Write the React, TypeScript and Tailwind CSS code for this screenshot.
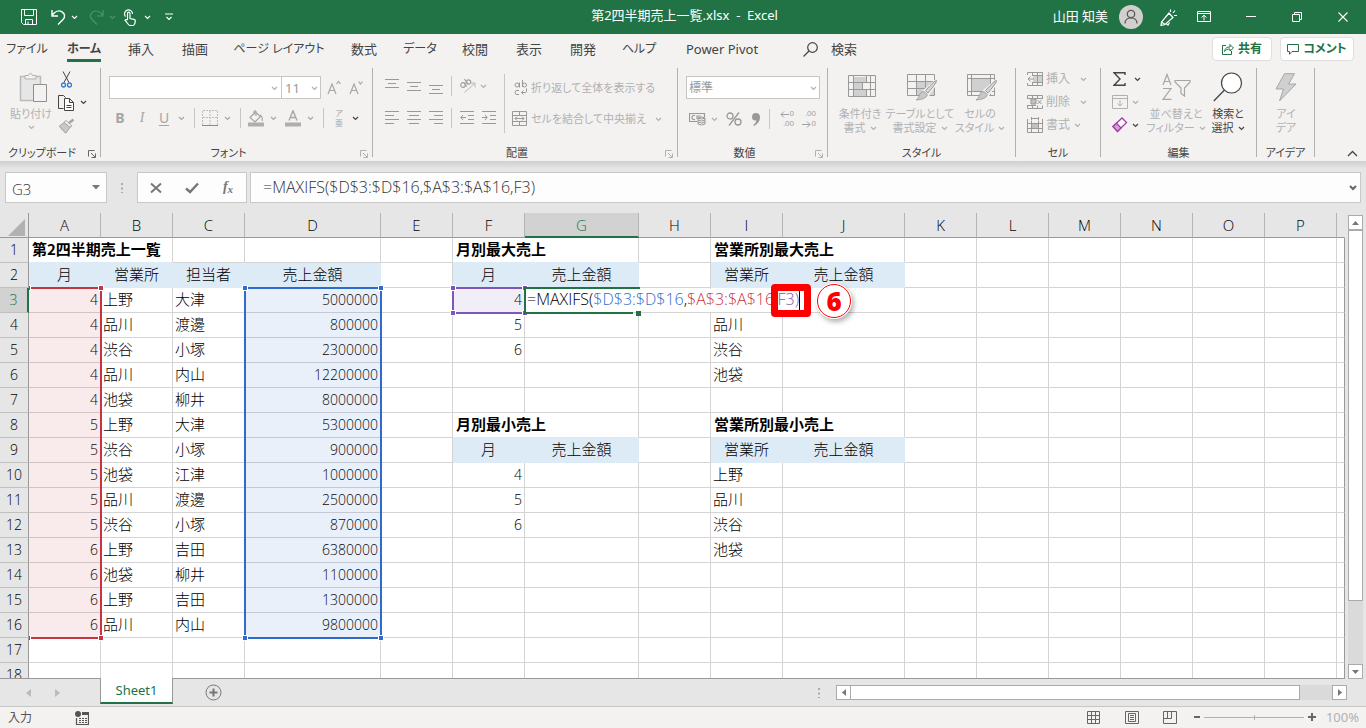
import React from 'react';
import { clsx } from 'clsx';

type IconProps = { w: number; h: number; className?: string; children: React.ReactNode };

function Icon({ w, h, className, children }: IconProps) {
  return (
    <svg
      width={w}
      height={h}
      viewBox={`0 0 ${w} ${h}`}
      fill="none"
      stroke="currentColor"
      className={clsx('shrink-0', className)}
      aria-hidden="true"
    >
      {children}
    </svg>
  );
}

function Chevron({ className }: { className?: string }) {
  return (
    <Icon w={7} h={5} className={clsx('inline-block', className)}>
      <path d="M1 1l2.5 2.5L6 1" strokeWidth="1.2" />
    </Icon>
  );
}

function Lines({ rows }: { rows: [number, number, number][] }) {
  return (
    <Icon w={14} h={16}>
      {rows.map(([x, y, len]) => (
        <path key={y} d={`M${x} ${y + 0.5}h${len}`} />
      ))}
    </Icon>
  );
}

function Separator({ className }: { className?: string }) {
  return <div className={clsx('w-px shrink-0 bg-[#c8c6c4]', className)} />;
}

const TOOL = 'flex h-5 shrink-0 items-center justify-center';

interface GroupProps {
  label: string;
  className: string;
  launcher?: 'dark' | 'light';
  children: React.ReactNode;
}

function Group({ label, className, launcher, children }: GroupProps) {
  return (
    <section className={clsx('flex shrink-0 flex-col border-r border-[#b3b0ad]', className)}>
      <div className="flex h-[78px] text-[#b1b1b1]">{children}</div>
      <div className="relative h-[11px] text-center text-[11px] leading-[13px] whitespace-nowrap text-[#444]">
        {label}
        {launcher && (
          <button
            aria-label={`${label}の設定`}
            className={clsx('absolute right-1 top-1', launcher === 'dark' ? 'text-[#666]' : 'text-[#b1b1b1]')}
          >
            <Icon w={8} h={8}>
              <path d="M.5 6.5v-6h6M3 3l4 4M7.5 3.5v4h-4" />
            </Icon>
          </button>
        )}
      </div>
    </section>
  );
}

interface BigButtonProps {
  icon: React.ReactNode;
  lines: [string, string];
  chevron?: boolean;
  className?: string;
}

function BigButton({ icon, lines, chevron = true, className }: BigButtonProps) {
  return (
    <button className={clsx('flex shrink-0 flex-col items-center pt-1 whitespace-nowrap', className)}>
      <span className="flex h-[30px] items-center">{icon}</span>
      <span className="mt-1 text-[11px] leading-[15px]">{lines[0]}</span>
      <span className="flex items-center text-[11px] leading-[14px]">
        {lines[1]}
        {chevron && <Chevron className={lines[1] ? 'ml-1' : 'mt-1'} />}
      </span>
    </button>
  );
}

function TitleBar() {
  return (
    <header className="flex h-[34px] shrink-0 items-center bg-[#217346] text-white">
      <div className="flex flex-1 items-center pl-[21px]">
        <button aria-label="上書き保存">
          <Icon w={16} h={16}>
            <path d="M.5 .5h15v15H2.5l-2-2zM3.5 .5v6h9v-6M4.5 15.5v-5h7v5M7 12.5v3" />
          </Icon>
        </button>
        <button aria-label="元に戻す" className="ml-[14px] flex items-center gap-[5px]">
          <Icon w={15} h={16}>
            <path d="M1 1v6h6M1 6.5C4 2.5 8 1 11 2.8c3 2 3.500 5 1 7.700L7 15.500" strokeWidth="1.4" />
          </Icon>
          <Chevron />
        </button>
        <button aria-label="やり直し" className="ml-[11px] flex items-center gap-[5px] text-[#4f9070]">
          <Icon w={15} h={16}>
            <path d="M14 1v6H8M14 6.500C11 2.500 7 1 4 2.800c-3 2-3.500 5-1 7.700l5 5" strokeWidth="1.2" />
          </Icon>
          <Chevron />
        </button>
        <button aria-label="タッチ/マウス モードの切り替え" className="ml-[7px] flex items-center gap-2">
          <Icon w={13} h={17}>
            <path d="M2.500 7.500A4 4 0 1 1 9.500 5M4.500 11V4.500q0-1.300 1.200-1.300T7 4.500v5l4 .8q1.500.4 1.300 2l-.5 2.200q-.4 2-2.300 2H7.500Q6 16.500 5 15l-3-3.800q1-1.200 2.500-.2" strokeWidth="1.2" />
          </Icon>
          <Chevron />
        </button>
        <button aria-label="クイック アクセス ツール バーのカスタマイズ" className="ml-[14px]">
          <Icon w={8} h={8}>
            <path d="M0 1h8M1.500 4L4 6.500 6.500 4" strokeWidth="1.200" />
          </Icon>
        </button>
      </div>
      <h1 className="pb-1 text-[13px] leading-5 whitespace-pre">第2四半期売上一覧.xlsx  -  Excel</h1>
      <div className="flex flex-1 items-center justify-end pr-[18px]">
        <span className="text-[13px]">山田 知美</span>
        <span className="ml-[11px] flex h-6 w-6 items-center justify-center rounded-full bg-[#d2d0ce] text-[#5b5957]">
          <Icon w={14} h={16}>
            <circle cx="7" cy="5" r="3.700" strokeWidth="1.300" />
            <path d="M1 14.500C1 7 13 7 13 14.500" strokeWidth="1.300" />
          </Icon>
        </span>
        <button aria-label="近日公開の機能" className="ml-[17px]">
          <Icon w={17} h={17}>
            <path d="M9 4L1.500 13l-.5 3.500 4-1L13 8.500zM1.500 13L5 15.500M6 14.500l2 1.500 1.500-2.500M10.500 3V.5M13 4l2-2.500M14 6.500h3" strokeWidth="1.200" />
          </Icon>
        </button>
        <button aria-label="リボンの表示オプション" className="ml-5">
          <Icon w={14} h={12}>
            <path d="M.5.5h13v10H.5zM.5 2.500h13M7 9.500v-5M4.500 6.500L7 4.200l2.500 2.300" />
          </Icon>
        </button>
        <button aria-label="最小化" className="ml-[35px]">
          <Icon w={10} h={10}><path d="M0 4.500h10" /></Icon>
        </button>
        <button aria-label="元のサイズに戻す" className="ml-9">
          <Icon w={10} h={10}>
            <path d="M.5 2.500h7v7h-7zM2.500 2.500v-2h7v7h-2" />
          </Icon>
        </button>
        <button aria-label="閉じる" className="ml-9">
          <Icon w={10} h={10}><path d="M.5.5l9 9M9.500.5l-9 9" strokeWidth="1.100" /></Icon>
        </button>
      </div>
    </header>
  );
}

const TABS = [
  { name: 'ファイル', width: 'w-[54px]', kana: true },
  { name: 'ホーム', width: 'w-[60px]', active: true, kana: true },
  { name: '挿入', width: 'w-[54px]' },
  { name: '描画', width: 'w-[54px]' },
  { name: 'ページ レイアウト', width: 'w-[114px]', kana: true },
  { name: '数式', width: 'w-[56px]' },
  { name: 'データ', width: 'w-[56px]', kana: true },
  { name: '校閲', width: 'w-[54px]' },
  { name: '表示', width: 'w-[54px]' },
  { name: '開発', width: 'w-[54px]' },
  { name: 'ヘルプ', width: 'w-[58px]', kana: true },
  { name: 'Power Pivot', width: 'w-[108px]' },
];

function RibbonTabs() {
  return (
    <nav className="flex h-8 shrink-0 text-[13px] text-[#444]">
      {TABS.map((tab) => (
        <button
          key={tab.name}
          className={clsx(
            'flex shrink-0 flex-col items-center pt-[5px] whitespace-nowrap',
            tab.width,
            tab.kana ? 'text-xs leading-5' : 'leading-5',
            tab.active && 'font-bold'
          )}
        >
          {tab.name}
          {tab.active && <span className="h-[3px] w-[34px] bg-[#217346]" />}
        </button>
      ))}
      <button className="ml-[27px] flex items-start gap-[13px] pt-[5px] leading-5">
        <Icon w={15} h={15} className="mt-[3px]">
          <circle cx="9.500" cy="5.500" r="4.800" strokeWidth="1.200" />
          <path d="M6 9L.5 14.500" strokeWidth="1.200" />
        </Icon>
        検索
      </button>
      <div className="flex flex-1 items-start justify-end gap-2 pt-[3px] pr-3 text-xs font-bold text-[#217346]">
        <button className="flex h-6 w-[60px] items-center justify-center gap-1 rounded-sm border border-[#e1dfdd] bg-white">
          <Icon w={12} h={12}>
            <path d="M4 2.500H.5v9h9V8M2.500 8.500C3 5 5 4 8 4V1.500L11.500 5 8 8V6C5.500 6 4 6.500 2.500 8.500z" />
          </Icon>
          共有
        </button>
        <button className="flex h-6 w-[74px] items-center justify-center gap-1 rounded-sm border border-[#e1dfdd] bg-white">
          <Icon w={12} h={11}>
            <path d="M.5.5h11v7H5l-2.500 2.800V7.500h-2z" />
          </Icon>
          コメント
        </button>
      </div>
    </nav>
  );
}

function ClipboardGroup() {
  return (
    <Group label="クリップボード" className="w-[101px] [&>div:last-child]:pr-4" launcher="dark">
      <BigButton
        className="w-[58px] pl-1"
        lines={['貼り付け', '']}
        icon={
          <Icon w={28} h={30} className="ml-1">
            <path d="M1.500 4.500h20v24h-20z" fill="#e6e6e6" stroke="#bdbbb9" strokeWidth="1.500" />
            <path d="M6 7V3.500h3.500Q11.500-1 13.500 3.500H17V7z" fill="#f3f2f1" stroke="#b1b1b1" />
            <path d="M14.500 12.500h13v17h-13z" fill="#f3f2f1" stroke="#8f8f8f" />
          </Icon>
        }
      />
      <div className="flex flex-col items-start pt-[2px] text-[#444]">
        <button aria-label="切り取り" className="ml-[3px] flex h-[19px] items-center">
          <Icon w={11} h={17}>
            <path d="M2 .5l6 11M9 .5l-6 11" />
            <circle cx="2.500" cy="14" r="2" stroke="#2b7cd3" strokeWidth="1.300" />
            <circle cx="8.500" cy="14" r="2" stroke="#2b7cd3" strokeWidth="1.300" />
          </Icon>
        </button>
        <button aria-label="コピー" className="mt-1 flex h-[19px] items-center gap-[6px]">
          <Icon w={16} h={16}>
            <path d="M5.500 13.500h-5V.5h5l2 2" />
            <path d="M6.500 3.500h5l4 4v8h-9zM11.500 3.500v4h4M8.500 10.500h5M8.500 12.500h5" fill="#fff" />
          </Icon>
          <Chevron />
        </button>
        <button aria-label="書式のコピー/貼り付け" className="mt-1 flex h-[19px] items-center text-[#a6a6a6]">
          <Icon w={16} h={16}>
            <path d="M15.500 1.500l-4.500 3.500" strokeWidth="2.400" />
            <path d="M8 2.500l6 5.500-2 1.500L6 4.200z" fill="#f3f2f1" />
            <path d="M6 4.500L1 8.500l2 1 .5 2 2 .5.500 2 2 1 4-5.500z" fill="#c8c8c8" />
          </Icon>
        </button>
      </div>
    </Group>
  );
}

function FontGroup() {
  return (
    <Group label="フォント" className="w-[272px] [&>div:last-child]:pr-4" launcher="light">
      <div className="flex flex-col pt-2 pl-2">
        <div className="flex items-center">
          <div className="relative">
            <select aria-label="フォント名" className="block h-[23px] w-[173px] appearance-none border border-[#c8c6c4] bg-white" />
            <Chevron className="absolute right-1 top-[10px]" />
          </div>
          <div className="relative -ml-px">
            <select
              aria-label="フォント サイズ"
              className="block h-[23px] w-10 appearance-none border border-[#c8c6c4] bg-white pl-[3px] text-[13px] leading-5 text-[#999]"
            >
              <option>11</option>
            </select>
            <Chevron className="absolute right-[3px] top-[10px]" />
          </div>
          <button aria-label="フォント サイズの拡大" className="ml-[6px] text-[#a6a6a6]">
            <Icon w={15} h={16}>
              <path d="M1 14L5 4l4 10M2.500 10.500h5M9.500 4L11.500 1.500 13.500 4" strokeWidth="1.200" />
            </Icon>
          </button>
          <button aria-label="フォント サイズの縮小" className="ml-[7px] text-[#a6a6a6]">
            <Icon w={15} h={16}>
              <path d="M1 14L5 4l4 10M2.500 10.500h5M9.500 1.500l2 2.500 2-2.500" strokeWidth="1.200" />
            </Icon>
          </button>
        </div>
        <div className="mt-[9px] flex items-center text-[#a6a6a6]">
          <button className={clsx(TOOL, 'w-[22px] text-sm font-bold')}>B</button>
          <button className={clsx(TOOL, 'w-[22px] font-["Liberation_Serif",serif] text-sm italic')}>I</button>
          <button className={clsx(TOOL, 'w-[22px] text-sm underline underline-offset-2')}>U</button>
          <button aria-label="下線の種類" className={clsx(TOOL, 'w-3')}><Chevron /></button>
          <Separator className="ml-[7px] h-5" />
          <button aria-label="罫線" className={clsx(TOOL, 'ml-[7px] w-4')}>
            <Icon w={16} h={16}>
              <path d="M.5 15V.5h15V15M8 1v14M1 7.500h14" strokeDasharray="2 1" stroke="#bdbdbd" />
              <path d="M0 15.500h16" stroke="#8a8a8a" />
            </Icon>
          </button>
          <button aria-label="罫線の種類" className={clsx(TOOL, 'w-[18px]')}><Chevron /></button>
          <Separator className="ml-1 h-5" />
          <button aria-label="塗りつぶしの色" className={clsx(TOOL, 'ml-[7px] w-4')}>
            <Icon w={16} h={17}>
              <path d="M7.500 2L2 7.500 7 12l5.500-5.500zM6 5V1.500Q7 0 8 1.500V6M12 5q3 1.500 2 6" strokeWidth="1.200" />
              <path d="M0 14.500h16" stroke="#b0adab" strokeWidth="4" />
            </Icon>
          </button>
          <button aria-label="塗りつぶしの色を選択" className={clsx(TOOL, 'w-[18px]')}><Chevron /></button>
          <button aria-label="フォントの色" className={clsx(TOOL, 'ml-[3px] w-4')}>
            <Icon w={16} h={17}>
              <path d="M4 10.500L8 .800l4 9.700M5.300 7.500h5.400" strokeWidth="1.400" />
              <path d="M0 14.500h16" stroke="#b0adab" strokeWidth="4" />
            </Icon>
          </button>
          <button aria-label="フォントの色を選択" className={clsx(TOOL, 'w-[18px]')}><Chevron /></button>
          <Separator className="ml-1 h-5" />
          <button className={clsx(TOOL, 'ml-[9px] w-3 flex-col text-[8px] leading-[10px]')}>
            <span>ア</span>
            <span>亜</span>
          </button>
          <button aria-label="ふりがなの種類" className={clsx(TOOL, 'w-5 text-[#444]')}><Chevron /></button>
        </div>
      </div>
    </Group>
  );
}

function AlignGroup() {
  return (
    <Group label="配置" className="w-[305px] [&>div:last-child]:pr-4" launcher="light">
      <div className="flex flex-col pt-2 pl-3 text-[#999]">
        <div className="flex items-center">
          <button aria-label="上揃え" className={clsx(TOOL, 'w-[14px]')}><Lines rows={[[0, 1, 14], [3, 5, 8], [0, 9, 14]]} /></button>
          <button aria-label="上下中央揃え" className={clsx(TOOL, 'ml-2 w-[14px]')}><Lines rows={[[0, 4, 14], [3, 8, 8], [0, 12, 14]]} /></button>
          <button aria-label="下揃え" className={clsx(TOOL, 'ml-2 w-[14px]')}><Lines rows={[[0, 7, 14], [3, 11, 8], [0, 15, 14]]} /></button>
          <Separator className="ml-2 h-5" />
          <button aria-label="方向" className={clsx(TOOL, 'ml-[7px] gap-1 text-[#b1b1b1]')}>
            <Icon w={17} h={16} className="text-[#a0a0a0]">
              <circle cx="4" cy="7" r="2.300" strokeWidth="1.200" />
              <path d="M5.300 5l2.400 3.500M5.500 1l3.500 5" strokeWidth="1.200" />
              <circle cx="9.500" cy="4" r="2.200" strokeWidth="1.200" />
              <path d="M5.500 14.500L15.500 5.500M11.500 5h4.500v4.500" stroke="#b8b8b8" />
            </Icon>
            <Chevron />
          </button>
        </div>
        <div className="mt-3 flex items-center">
          <button aria-label="左揃え" className={clsx(TOOL, 'w-[14px]')}><Lines rows={[[0, 1, 14], [0, 5, 9], [0, 9, 14], [0, 13, 9]]} /></button>
          <button aria-label="中央揃え" className={clsx(TOOL, 'ml-2 w-[14px]')}><Lines rows={[[0, 1, 14], [2, 5, 10], [0, 9, 14], [2, 13, 10]]} /></button>
          <button aria-label="右揃え" className={clsx(TOOL, 'ml-2 w-[14px]')}><Lines rows={[[0, 1, 14], [5, 5, 9], [0, 9, 14], [5, 13, 9]]} /></button>
          <Separator className="ml-2 h-5" />
          <button aria-label="インデントを減らす" className={clsx(TOOL, 'ml-2')}>
            <Icon w={15} h={14}>
              <path d="M0 .5h14M8 4.500h6M8 8.500h6M0 12.500h14M1 6.500h5M3 4L.8 6.500 3 9" />
            </Icon>
          </button>
          <button aria-label="インデントを増やす" className={clsx(TOOL, 'ml-[7px]')}>
            <Icon w={15} h={14}>
              <path d="M0 .5h14M8 4.500h6M8 8.500h6M0 12.500h14M0 6.500h5M3 4l2.200 2.500L3 9" />
            </Icon>
          </button>
        </div>
      </div>
      <Separator className="mt-[6px] ml-[7px] h-[59px]" />
      <div className="flex flex-col pt-[10px] pl-[7px] text-[11px] whitespace-nowrap">
        <button className="flex h-5 items-center gap-[3px]">
          <Icon w={16} h={16} className="text-[#999]">
            <circle cx="5" cy="5" r="2" />
            <path d="M7.500 2.500v5M10.500 0v7" />
            <circle cx="12.500" cy="5" r="2" />
            <path d="M7 10.500q-4-1-4 2t4 2M14.500 8.500v3q0 1-1 1h-4M11.500 10.500l-2 2 2 2" />
          </Icon>
          折り返して全体を表示する
        </button>
        <button className="mt-[11px] flex h-5 items-center gap-[3px]">
          <Icon w={16} h={16} className="text-[#999]">
            <path d="M.5.5h14v14H.5zM.5 4.500h14M.5 10.500h14M7.500.5v4M7.500 10.500v4M3 7.500h9M5 5.500L3 7.500l2 2M10 5.500l2 2-2 2" />
          </Icon>
          セルを結合して中央揃え
          <Chevron className="ml-[6px]" />
        </button>
      </div>
    </Group>
  );
}

function NumberGroup() {
  return (
    <Group label="数値" className="w-[150px] [&>div:last-child]:pr-4" launcher="light">
      <div className="flex flex-col pt-2 pl-2">
        <div className="relative">
          <select
            aria-label="表示形式"
            className="block h-[23px] w-[134px] appearance-none border border-[#c8c6c4] bg-white pl-[2px] text-xs leading-5 text-[#999]"
          >
            <option>標準</option>
          </select>
          <Chevron className="absolute right-[3px] top-[10px]" />
        </div>
        <div className="mt-[10px] flex items-center pl-[3px] text-[#999]">
          <button aria-label="通貨表示形式" className={clsx(TOOL, 'gap-[5px]')}>
            <Icon w={17} h={14}>
              <path d="M8 9.500H.5v-8h15V5M6 3.500Q3 3 3 5.500T6 7.500M8 7V4h4" strokeWidth="1.200" />
              <path d="M9 6v6q3.500 2 7 0V6q-3.500 2-7 0 3.500-2 7 0M9 8q3.500 2 7 0M9 10q3.500 2 7 0" fill="#f3f2f1" />
            </Icon>
            <Chevron className="text-[#b1b1b1]" />
          </button>
          <button aria-label="パーセント スタイル" className={clsx(TOOL, 'ml-2 w-4')}>
            <Icon w={16} h={14}>
              <circle cx="4" cy="4" r="3" strokeWidth="1.300" />
              <circle cx="12" cy="10" r="3" strokeWidth="1.300" />
              <path d="M13 .5l-10 13" strokeWidth="1.300" />
            </Icon>
          </button>
          <button aria-label="桁区切りスタイル" className={clsx(TOOL, 'ml-[10px] w-2')}>
            <Icon w={8} h={13}>
              <path d="M4 0q4 0 4 4.500Q8 10 2 13l-.8-1Q4 10 4.500 7.500 0 8 0 4q0-4 4-4z" fill="currentColor" stroke="none" />
            </Icon>
          </button>
          <Separator className="ml-[9px] h-5" />
          <button aria-label="小数点以下の表示桁数を増やす" className={clsx(TOOL, 'ml-2 w-4 flex-col items-end font-["Liberation_Sans",sans-serif] text-[8px] leading-[10px] text-[#a0a0a0]')}>
            <span className="flex items-center gap-px">
              <Icon w={9} h={7}><path d="M1 3.500h8M4 .5l-3 3 3 3" /></Icon>0
            </span>
            <span>.00</span>
          </button>
          <button aria-label="小数点以下の表示桁数を減らす" className={clsx(TOOL, 'ml-[6px] w-4 flex-col items-end font-["Liberation_Sans",sans-serif] text-[8px] leading-[10px] text-[#a0a0a0]')}>
            <span>.00</span>
            <span className="flex items-center gap-px">
              <Icon w={9} h={7}><path d="M0 3.500h8M5 .5l3 3-3 3" /></Icon>0
            </span>
          </button>
        </div>
      </div>
    </Group>
  );
}

function Brush() {
  return (
    <>
      <path d="M29.500 8L18 18l3 3z" fill="#e1dfdd" stroke="#f3f2f1" strokeWidth="4" />
      <path d="M29.500 7.500q1 1-8.500 12.500l-2.500-2.500Q28 7 29.500 7.500z" fill="#d6d6d6" stroke="#999" />
      <path d="M17 18.500l3.500 3Q19 26.500 9 27q3-1.500 3.500-5t4.500-3.500z" fill="#c8c8c8" stroke="#a6a6a6" />
    </>
  );
}

function StylesGroup() {
  return (
    <Group label="スタイル" className="w-[188px]">
      <div className="flex pl-[2px]">
        <BigButton
          className="w-[60px]"
          lines={['条件付き', '書式']}
          icon={
            <Icon w={29} h={27} className="ml-1 text-[#999]">
              <path d="M6 3h12v6H6zM6 16h12v6H6zM6 9h9v7H6z" fill="#d0d0d0" stroke="none" />
              <path d="M.5 1.500h27v21H.5zM5.500 1.500v21M.5 8.500h27M.5 15.500h27M18.500 1.500v7M14.500 8.500v7M18.500 15.500v7M22.500 1.500v21" />
            </Icon>
          }
        />
        <BigButton
          className="w-[60px]"
          lines={['テーブルとして', '書式設定']}
          icon={
            <Icon w={31} h={28} className="ml-1 text-[#999]">
              <path d="M10 9h18v13H10z" fill="#d0d0d0" stroke="none" />
              <path d="M.5 1.500h27v21H.5zM.5 8.500h27M.5 15.500h27M9.500 1.500v21M18.500 1.500v21" />
              <Brush />
            </Icon>
          }
        />
        <BigButton
          className="w-[60px]"
          lines={['セルの', 'スタイル']}
          icon={
            <Icon w={31} h={28} className="ml-1 text-[#999]">
              <path d="M5 6h18v12H5z" fill="#d0d0d0" stroke="none" />
              <path d="M.5 1.500h27v21H.5zM.5 5.500h27M.5 18.500h27M4.500 1.500v21M23.500 1.500v21" />
              <Brush />
            </Icon>
          }
        />
      </div>
    </Group>
  );
}

function CellsGroup() {
  return (
    <Group label="セル" className="w-[85px]">
      <div className="flex flex-col gap-[3px] pt-[1px] pl-[11px] text-xs">
        <button className="flex h-5 items-center gap-[3px]">
          <Icon w={16} h={14} className="text-[#999]">
            <path d="M6 4h10v6H6z" fill="#d0d0d0" stroke="none" />
            <path d="M.5 3V.5h15v13H.5V11M5.500.5v3M10.500.5v13M5 3.500h10.500M5 10.500h10.500M5.500 10v3.500M1 7h6M3.500 4.500L1 7l2.500 2.500" />
          </Icon>
          挿入
          <Chevron className="ml-[7px]" />
        </button>
        <button className="flex h-5 items-center gap-[3px]">
          <Icon w={16} h={14} className="text-[#999]">
            <path d="M4 4h5v5H4z" fill="#c0c0c0" />
            <path d="M.5 3.500V.5h15v3M5.500.5v3M10.500.5v3M0 3.500h16M0 10.500h9M.5 10.500v3h15v-3M5.500 10.500v3M10.500 10.500v3M10.500 5l4 4M14.500 5l-4 4" />
          </Icon>
          削除
          <Chevron className="ml-[7px]" />
        </button>
        <button className="flex h-5 items-center gap-[3px]">
          <Icon w={16} h={16} className="text-[#999]">
            <path d="M5 7h6v4H5z" fill="#c0c0c0" stroke="none" />
            <path d="M.5 2v13.500h15V2M4.500 3.500v12M11.500 3.500v12M.5 6.500h15M.5 11.500h15M4 1.500h8M4.500 0v3M11.500 0v3" />
          </Icon>
          書式
          <Chevron className="ml-px" />
        </button>
      </div>
    </Group>
  );
}

function EditGroup() {
  return (
    <Group label="編集" className="w-[156px]">
      <div className="flex w-[43px] flex-col gap-[3px] pt-[1px] pl-[11px]">
        <button aria-label="合計" className="flex h-5 items-center gap-2 pl-px text-[#444]">
          <Icon w={13} h={14}>
            <path d="M12 3V.7H1L7 7l-6 6.300h11V11" strokeWidth="1.400" />
          </Icon>
          <Chevron />
        </button>
        <button aria-label="フィル" className="flex h-5 items-center gap-1">
          <Icon w={16} h={14}>
            <path d="M.5.5h15v13H.5zM.5 3.500h15M8 5v6M5.500 8.500L8 11l2.500-2.500" />
          </Icon>
          <Chevron />
        </button>
        <button aria-label="クリア" className="flex h-5 items-center gap-1 text-[#444]">
          <Icon w={16} h={16} className="text-[#a13da5]">
            <path d="M1 9.500L10 1l4.500 4.500L5.500 14.500z" fill="#fff" strokeWidth="1.300" />
            <path d="M1 9.500l3.500-3.300L9 11l-3.500 3.500z" fill="#d59ed7" strokeWidth="1.200" />
          </Icon>
          <Chevron />
        </button>
      </div>
      <BigButton
        className="w-16"
        lines={['並べ替えと', 'フィルター']}
        icon={
          <Icon w={29} h={28} className="text-[#a6a6a6]">
            <path d="M1 12L5 1.500 9 12M2.500 8.500h5M1 15.500h8l-8 10.800h8.500" strokeWidth="1.200" />
            <path d="M13 7.500h15v1.500l-5.500 6v8l-3.500-2.500V15L13 9z" strokeWidth="1.200" />
          </Icon>
        }
      />
      <BigButton
        className="w-10 text-[#444]"
        lines={['検索と', '選択']}
        icon={
          <Icon w={30} h={30}>
            <circle cx="18.500" cy="11" r="10" fill="#fff" strokeWidth="1.200" />
            <path d="M11.500 18L.8 29" strokeWidth="1.300" />
          </Icon>
        }
      />
    </Group>
  );
}

function Ribbon() {
  return (
    <div className="relative flex h-[95px] shrink-0 pt-[2px]">
      <div className="flex h-[89px]">
        <ClipboardGroup />
        <FontGroup />
        <AlignGroup />
        <NumberGroup />
        <StylesGroup />
        <CellsGroup />
        <EditGroup />
        <Group label="アイデア" className="w-[58px]">
          <BigButton
            className="w-[58px]"
            lines={['アイ', 'デア']}
            chevron={false}
            icon={
              <Icon w={22} h={29} className="text-[#a6a6a6]">
                <path d="M9.500.7h10L13.500 11H21L4.500 28l4-12H1z" fill="#d0d0d0" />
              </Icon>
            }
          />
        </Group>
      </div>
      <div className="flex flex-1 items-end justify-end pr-2 pb-1 text-[#444]">
        <button aria-label="リボンを折りたたむ">
          <Icon w={11} h={7}><path d="M1 6l4.500-4.500L10 6" strokeWidth="1.300" /></Icon>
        </button>
      </div>
    </div>
  );
}

const FORMULA = '=MAXIFS($D$3:$D$16,$A$3:$A$16,F3)';

function FormulaBar() {
  return (
    <div className="flex h-[52px] shrink-0 items-start bg-linear-to-b from-[#cfcfcf] to-[#e6e6e6] to-15% pt-[11px] pr-[5px] pl-[5px] text-[#555]">
      <div className="flex h-[31px] w-[102px] shrink-0 items-center border border-[#c8c8c8] bg-[#fdfdfd]">
        <input aria-label="名前ボックス" defaultValue="G3" className='w-20 bg-transparent pt-[2px] pl-[6px] font-["Open_Sans","Noto_Sans",sans-serif] text-[15px] leading-5 font-light text-[#333]' />
        <button aria-label="名前の一覧" className="ml-[6px]">
          <Icon w={8} h={5}><path d="M0 0h8L4 4.500z" fill="#777" stroke="none" /></Icon>
        </button>
      </div>
      <div className="flex h-[31px] w-[30px] items-center justify-center">
        <Icon w={2} h={12}><path d="M1 1v10" strokeWidth="2" strokeDasharray="2 2.500" stroke="#aaa" /></Icon>
      </div>
      <div className="flex h-[31px] w-[110px] shrink-0 items-center border border-[#c8c8c8] bg-[#fdfdfd] text-[#777]">
        <button aria-label="キャンセル" className="flex w-9 justify-center">
          <Icon w={12} h={12}><path d="M1 1.500l10 9M11 1.500l-10 9" strokeWidth="2" /></Icon>
        </button>
        <button aria-label="入力" className="flex w-9 justify-center">
          <Icon w={14} h={12}><path d="M1 6.500l4 3.500L13 1.500" strokeWidth="2.400" /></Icon>
        </button>
        <button aria-label="関数の挿入" className='flex w-9 justify-center font-["Liberation_Serif",serif] text-sm leading-5 font-bold italic'>
          f<span className="pt-[2px] text-[11px]">x</span>
        </button>
      </div>
      <div className="ml-[3px] flex h-[31px] flex-1 items-center border border-[#c8c8c8] bg-[#fdfdfd] pr-[3px]">
        <input
          aria-label="数式バー"
          defaultValue={FORMULA}
          className='min-w-0 flex-1 bg-transparent pb-px pl-3 font-["Open_Sans","Noto_Sans",sans-serif] text-base leading-5 font-light text-[#333]'
        />
        <button aria-label="数式バーの展開">
          <Icon w={8} h={6}><path d="M1 1l3 3 3-3" strokeWidth="2" stroke="#666" /></Icon>
        </button>
      </div>
    </div>
  );
}

const COLUMNS = [
  { name: 'A', width: 'w-[72px]' },
  { name: 'B', width: 'w-[72px]' },
  { name: 'C', width: 'w-[72px]' },
  { name: 'D', width: 'w-[136px]' },
  { name: 'E', width: 'w-[72px]' },
  { name: 'F', width: 'w-[72px]' },
  { name: 'G', width: 'w-[114px]' },
  { name: 'H', width: 'w-[72px]' },
  { name: 'I', width: 'w-[72px]' },
  { name: 'J', width: 'w-[122px]' },
  { name: 'K', width: 'w-[72px]' },
  { name: 'L', width: 'w-[72px]' },
  { name: 'M', width: 'w-[72px]' },
  { name: 'N', width: 'w-[72px]' },
  { name: 'O', width: 'w-[72px]' },
  { name: 'P', width: 'w-[72px]' },
  { name: '', width: '' },
];

const SALES: [number, string, string, number][] = [
  [4, '上野', '大津', 5000000],
  [4, '品川', '渡邊', 800000],
  [4, '渋谷', '小塚', 2300000],
  [4, '品川', '内山', 12200000],
  [4, '池袋', '柳井', 8000000],
  [5, '上野', '大津', 5300000],
  [5, '渋谷', '小塚', 900000],
  [5, '池袋', '江津', 1000000],
  [5, '品川', '渡邊', 2500000],
  [5, '渋谷', '小塚', 870000],
  [6, '上野', '吉田', 6380000],
  [6, '池袋', '柳井', 1100000],
  [6, '上野', '吉田', 1300000],
  [6, '品川', '内山', 9800000],
];

const TITLES: Record<string, string> = {
  A1: '第2四半期売上一覧',
  F1: '月別最大売上',
  I1: '営業所別最大売上',
  F8: '月別最小売上',
  I8: '営業所別最小売上',
};

const HEADINGS: Record<string, string> = {
  A2: '月', B2: '営業所', C2: '担当者', D2: '売上金額',
  F2: '月', G2: '売上金額', I2: '営業所', J2: '売上金額',
  F9: '月', G9: '売上金額', I9: '営業所', J9: '売上金額',
};

const CELLS: Record<string, string | number> = {
  F3: 4, F4: 5, F5: 6,
  I4: '品川', I5: '渋谷', I6: '池袋',
  F10: 4, F11: 5, F12: 6,
  I10: '上野', I11: '品川', I12: '渋谷', I13: '池袋',
};
SALES.forEach((record, i) => {
  record.forEach((value, c) => {
    CELLS['ABCD'[c] + (i + 3)] = value;
  });
});

const HANDLES = ['-top-1 -left-1', '-top-1 -right-1', '-bottom-1 -left-1', '-bottom-1 -right-1'];

interface RangeProps {
  className: string;
  handle: string;
}

function Range({ className, handle }: RangeProps) {
  return (
    <div className={clsx('pointer-events-none absolute -top-px z-10', className)}>
      {HANDLES.map((corner) => (
        <span key={corner} className={clsx('absolute h-[6px] w-[6px] border border-white', corner, handle)} />
      ))}
    </div>
  );
}

function CellEditor() {
  return (
    <div className="absolute -top-px -left-px z-20 h-[27px]">
      <div className="h-[2px] w-[116px] bg-[#217346]" />
      <div className='flex h-[23px] border-l-2 border-[#217346] bg-white pl-px font-["Open_Sans","Noto_Sans",sans-serif] text-base leading-[21px] font-light whitespace-nowrap text-black'>
        =MAXIFS(<span className="text-[#2f6bcb]">$D$3:$D$16</span>,<span className="text-[#c93340]">$A$3:$A$16</span>,
        <span className="my-[2px] border-r border-black leading-[17px] text-[#7d56bc]">F3)</span>
      </div>
      <div className="flex h-[2px] w-[117px] items-center justify-between">
        <span className="h-[2px] w-[109px] bg-[#217346]" />
        <span className="h-[5px] w-[5px] bg-[#217346]" />
      </div>
      <div className="absolute -top-[3px] left-[247px] h-[33px] w-10 rounded-sm border-[7px] border-[#f00]" />
      <div className="absolute -top-1 left-[292px] flex h-9 w-9 items-center justify-center rounded-full bg-white shadow-[2px_3px_5px_rgba(0,0,0,0.3)]">
        <span className='flex h-[34px] w-[34px] items-center justify-center rounded-full border border-[#f00] font-["Open_Sans",sans-serif] text-[26px] leading-6 font-extrabold text-[#f00]'>
          6
        </span>
      </div>
    </div>
  );
}

function GridRow({ row }: { row: number }) {
  const active = row === 3;
  return (
    <tr>
      <th
        scope="row"
        className={clsx(
          'h-[25px] border-b border-[#c0c0c0] p-0 text-center leading-6 font-light',
          active ? 'border-r-2 border-r-[#217346] bg-[#d2d2d2] text-[#217346]' : 'border-r border-r-[#999] bg-[#e6e6e6] text-black'
        )}
      >
        {row}
      </th>
      {COLUMNS.map((column, i) => {
        const id = column.name + row;
        const before = i > 0 ? COLUMNS[i - 1].name + row : '';
        // titles run over the neighbouring cell
        if (TITLES[before]) return null;
        if (TITLES[id]) {
          return (
            <td key={id} colSpan={2} className='border-r border-b border-[#d4d4d4] p-0 pb-[2px] pl-[3px] font-["Noto_Sans_CJK_JP",sans-serif] leading-[22px] font-bold whitespace-nowrap'>
              {TITLES[id]}
            </td>
          );
        }
        if (HEADINGS[id]) {
          return (
            <td key={id} className="border-r border-b border-[#ddebf7] bg-[#ddebf7] p-0 pb-[2px] text-center leading-[22px] shadow-[0_-1px_0_#ddebf7]">
              {HEADINGS[id]}
            </td>
          );
        }
        const value = CELLS[id];
        return (
          <td
            key={id || i}
            className={clsx(
              'relative border-r border-b border-[#d4d4d4] p-0 whitespace-nowrap',
              typeof value === 'number' ? 'pr-[2px] text-right text-sm leading-6 font-light' : 'pb-[2px] pl-[2px] leading-[22px]',
              i === COLUMNS.length - 1 && 'border-r-[#999]'
            )}
          >
            {value}
            {id === 'A3' && <Range className="left-0 h-[352px] w-[73px] border-2 border-l-0 border-[#c93340] bg-[#c93340]/10 [clip-path:inset(-4px_-4px_-4px_0)]" handle="bg-[#c93340]" />}
            {id === 'D3' && <Range className="-left-px h-[352px] w-[138px] border-2 border-[#2f6bcb] bg-[#2f6bcb]/10" handle="bg-[#2f6bcb]" />}
            {id === 'F3' && <Range className="-left-px h-[27px] w-[74px] border-2 border-[#7d56bc] bg-[#7d56bc]/10" handle="bg-[#7d56bc]" />}
            {id === 'G3' && <CellEditor />}
          </td>
        );
      })}
    </tr>
  );
}

function Sheet() {
  return (
    <main className="flex min-h-0 flex-1 bg-[#e6e6e6]">
      <div className="min-w-0 flex-1 overflow-hidden border-b border-[#999]">
        <table className='w-full table-fixed border-separate border-spacing-0 bg-white font-["Open_Sans","Noto_Sans_CJK_JP",sans-serif] text-[15px] font-light text-black'>
          <colgroup>
            <col className="w-[29px]" />
            {COLUMNS.map((column, i) => (
              <col key={i} className={column.width} />
            ))}
          </colgroup>
          <thead>
            <tr>
              <th className="h-[25px] border-r border-b border-[#999] bg-[#e6e6e6] p-0">
                <Icon w={18} h={17} className="mt-1 ml-2">
                  <path d="M17 0v17H0z" fill="#b1b1b1" stroke="none" />
                </Icon>
              </th>
              {COLUMNS.map((column, i) => (
                <th
                  key={i}
                  scope="col"
                  className={clsx(
                    'h-[25px] border-r border-r-[#b5b5b5] p-0 text-center text-[15px] leading-[22px] font-light',
                    column.name === 'G'
                      ? 'border-b-2 border-b-[#217346] bg-[#d2d2d2] text-[#217346]'
                      : 'border-b border-b-[#999] bg-[#e6e6e6] text-black',
                    i === COLUMNS.length - 1 && 'border-r-[#e6e6e6]'
                  )}
                >
                  {column.name}
                </th>
              ))}
            </tr>
          </thead>
          <tbody className="[&_th]:text-sm">
            {Array.from({ length: 18 }, (_, i) => (
              <GridRow key={i} row={i + 1} />
            ))}
          </tbody>
        </table>
      </div>
      <div className="mx-[3px] mt-[2px] flex w-[15px] shrink-0 flex-col bg-[#dadada]">
        <button aria-label="上へスクロール" className="flex h-[15px] shrink-0 items-center justify-center border border-[#ababab] bg-white">
          <Icon w={7} h={4}><path d="M0 4l3.500-4L7 4z" fill="#777" stroke="none" /></Icon>
        </button>
        <div className="h-4/5 border border-[#ababab] bg-white" />
        <div className="flex-1" />
        <button aria-label="下へスクロール" className="flex h-[15px] shrink-0 items-center justify-center border border-[#ababab] bg-white">
          <Icon w={7} h={4}><path d="M0 0h7L3.500 4z" fill="#777" stroke="none" /></Icon>
        </button>
      </div>
    </main>
  );
}

function SheetTabs() {
  return (
    <div className="flex h-7 shrink-0 items-center border-b border-[#c6c6c6] bg-[#e6e6e6] text-[#777]">
      <div className="flex w-[100px] items-center gap-6 pl-[26px]">
        <button aria-label="前のシート" className="h-7"><Icon w={5} h={8}><path d="M5 0v8L0 4z" fill="#bbb" stroke="none" /></Icon></button>
        <button aria-label="次のシート" className="h-7"><Icon w={5} h={8}><path d="M0 0v8l5-4z" fill="#bbb" stroke="none" /></Icon></button>
      </div>
      <button className="relative -top-px mb-[2px] h-[26px] w-[73px] self-start border-x border-b-2 border-x-[#999] border-b-[#217346] bg-white pt-[2px] text-[13px] text-[#217346]">
        Sheet1
      </button>
      <button aria-label="新しいシート" className="ml-8">
        <Icon w={17} h={17}>
          <circle cx="8.500" cy="8.500" r="7.500" />
          <path d="M8.500 4.500v8M4.500 8.500h8" strokeWidth="2" />
        </Icon>
      </button>
      <div className="flex flex-1 justify-end pr-4">
        <Icon w={2} h={12}><path d="M1 1v10" strokeWidth="2" strokeDasharray="2 2.500" stroke="#aaa" /></Icon>
      </div>
      <div className="mr-[19px] flex h-[15px] w-[511px] bg-[#dadada]">
        <button aria-label="左へスクロール" className="flex w-[15px] shrink-0 items-center justify-center border border-[#ababab] bg-white">
          <Icon w={4} h={7}><path d="M4 0v7L0 3.500z" fill="#777" stroke="none" /></Icon>
        </button>
        <div className="-ml-px w-[450px] border border-[#ababab] bg-white" />
        <div className="flex-1" />
        <button aria-label="右へスクロール" className="flex w-[15px] shrink-0 items-center justify-center border border-[#ababab] bg-white">
          <Icon w={4} h={7}><path d="M0 0v7l4-3.500z" fill="#777" stroke="none" /></Icon>
        </button>
      </div>
    </div>
  );
}

function StatusBar() {
  return (
    <footer className="flex h-[21px] shrink-0 items-center bg-[#f3f2f1] text-xs text-[#555]">
      <span className="pl-2">入力</span>
      <button aria-label="マクロの記録" className="ml-[43px]">
        <Icon w={14} h={14}>
          <path d="M1.500 7v6.500h12v-12H7" strokeWidth="1.200" />
          <path d="M7 3h6M4 7.500h8M4 9.500h8M4 11.500h8" strokeDasharray="2 1" />
          <path d="M7 1h7v3H7z" fill="currentColor" stroke="none" />
          <circle cx="3" cy="3" r="3" fill="currentColor" stroke="none" />
        </Icon>
      </button>
      <div className="flex flex-1 items-center justify-end pr-[7px] pb-px text-[#666]">
        <button aria-label="標準">
          <Icon w={13} h={13}><path d="M.5.5h12v12H.5zM4.500.5v12M8.500.5v12M.5 4.500h12M.5 8.500h12" /></Icon>
        </button>
        <button aria-label="ページ レイアウト" className="ml-[25px]">
          <Icon w={14} h={13}><path d="M.5.5h13v12H.5zM3.500 2.500h7v8h-7zM5 4.500h4M5 6.500h4M5 8.500h4" /></Icon>
        </button>
        <button aria-label="改ページ プレビュー" className="ml-6">
          <Icon w={14} h={13}><path d="M.5.5h13v12H.5zM4.500.5v7M.5 7.500h8v-7" /></Icon>
        </button>
        <button aria-label="縮小" className="ml-[17px]">
          <Icon w={6} h={8}><path d="M0 4h6" strokeWidth="2" /></Icon>
        </button>
        <div className="relative mx-1 flex h-2 w-[100px] items-center">
          <input
            type="range"
            aria-label="ズーム"
            defaultValue={50}
            className="h-px w-full appearance-none bg-[#b1b1b1] [&::-webkit-slider-thumb]:appearance-none"
          />
          <span className="absolute top-[2px] left-1/2 h-[5px] w-px bg-[#b1b1b1]" />
        </div>
        <button aria-label="拡大">
          <Icon w={8} h={8}><path d="M0 4h8M4 0v8" strokeWidth="2" /></Icon>
        </button>
        <span className="ml-[10px] text-[13px] leading-5 text-[#b1b1b1]">100%</span>
      </div>
    </footer>
  );
}

export default function App() {
  return (
    <div className='flex h-screen flex-col overflow-hidden bg-[#f3f2f1] font-["Noto_Sans","Noto_Sans_CJK_JP",sans-serif] [font-feature-settings:"palt"]'>
      <TitleBar />
      <RibbonTabs />
      <Ribbon />
      <FormulaBar />
      <Sheet />
      <SheetTabs />
      <StatusBar />
    </div>
  );
}
